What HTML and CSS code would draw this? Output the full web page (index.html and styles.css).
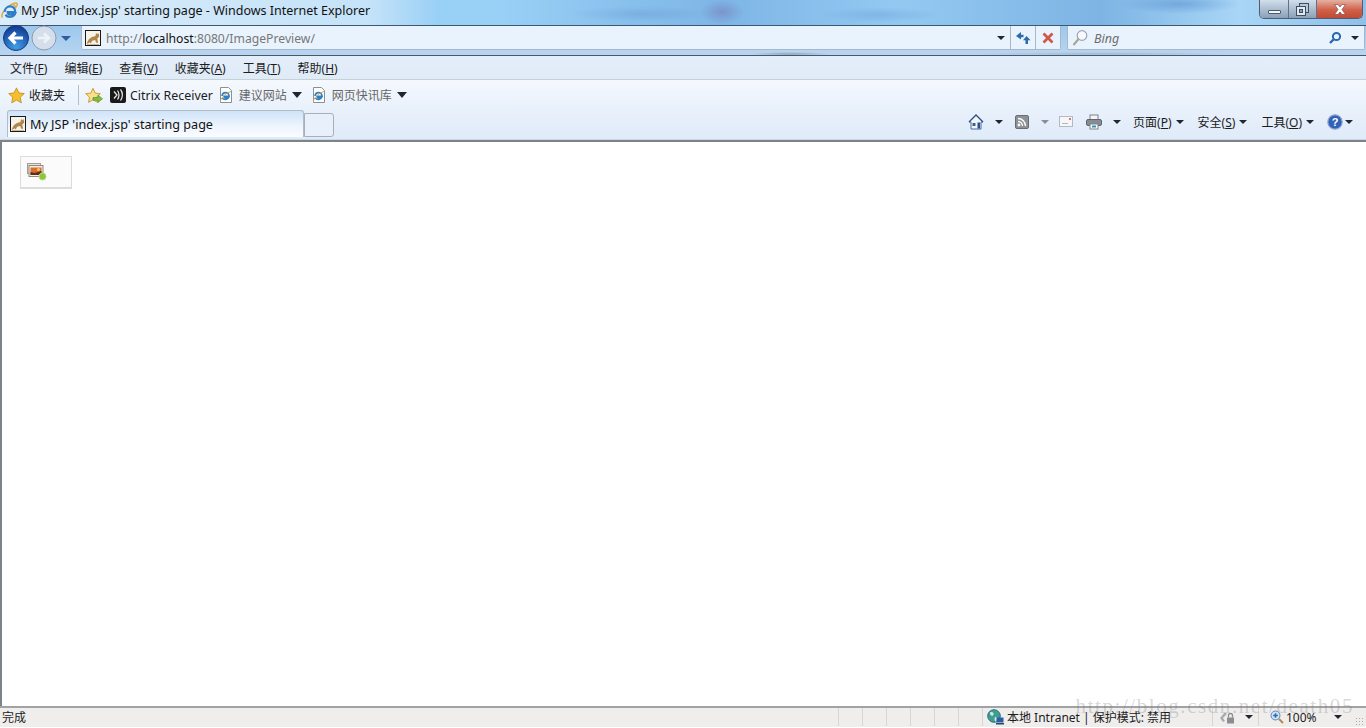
FILE: index.html
```html
<!DOCTYPE html>
<html>
   <head>
      <meta charset="utf-8">
      <title>My JSP 'index.jsp' starting page</title>
      <link rel="stylesheet" href="styles.css">
   </head>
   <body>
      <svg class="defs" width="0" height="0">
         <symbol id="ie" viewBox="0 0 18 18">
            <path d="M1.500 16.500C-.5 14.500 3 8 8 4.500 11.500 2 16 .3 17 1.500c.7 1-.4 3-1.300 4.200-.5-1.300-1.400-2.300-2.500-2.900" fill="none" stroke="#d9a93a" stroke-width="1.500"/>
            <path d="M3.800 10.500C4 7 6.600 4.700 9.700 4.700c3.400 0 5.500 2.600 5.400 6H7.100c.1 2.900 4.300 3.300 5.900 1h2.200c-1.600 4.600-8 5.200-10.500 1.800" fill="none" stroke="#2f7fc8" stroke-width="2.300"/>
         </symbol>
         <symbol id="tomcat" viewBox="0 0 16 16">
            <rect x=".5" y=".5" width="15" height="15" fill="#f6f3ea" stroke="#1a1a1a"/>
            <path d="M1.500 13.500l2.500-4.500 3-2 3.500-1 .5-3 1.300 1.200L13.500 3l.8 3.500-2 2 .7 4.500-2-.5-.8-2.500-3 .8-1.500 2.700-1.200-1.200-1.500 1.200z" fill="#b0864a"/>
            <path d="M2 14.500h12" stroke="#cbb78a"/>
         </symbol>
         <symbol id="favpage" viewBox="0 0 16 16">
            <path d="M2.500 .5h8l3 3v12h-11z" fill="#fff" stroke="#8a8f96"/>
            <path d="M4 9C4.200 6.800 5.800 5.600 7.700 5.600c2.100 0 3.500 1.600 3.400 3.700H5.800c.1 1.800 2.700 2.100 3.700.7h1.400c-1 2.900-5 3.200-6.500 1.100" fill="none" stroke="#2f7fc8" stroke-width="1.600"/>
            <path d="M2.500 14.500C2 12.500 7 6 13 4.500" fill="none" stroke="#d9a93a"/>
         </symbol>
      </svg>

      <div class="titlebar">
         <svg class="ico16" width="17" height="17"><use href="#ie"/></svg>
         <span class="title-text">My JSP 'index.jsp' starting page - Windows Internet Explorer</span>
         <div class="winbtns">
            <div class="winbtn minbtn"><span class="min-glyph"></span></div>
            <div class="winbtn maxbtn">
               <svg width="13" height="13" viewBox="0 0 13 13"><rect x="3.500" y=".5" width="9" height="9" fill="#b8c8d8" stroke="#3f4e60"/><rect x=".5" y="3.500" width="9" height="9" fill="#dfe7ef" stroke="#3f4e60"/><rect x="3.500" y="6.500" width="3" height="3" fill="#8aa0b8" stroke="#3f4e60"/></svg>
            </div>
            <div class="winbtn closebtn">
               <svg width="16" height="11" viewBox="0 0 16 11"><path d="M2.500 .5h3.500L8 3l2-2.500h3.500L10 5.500l3.500 5H10L8 8l-2 2.500H2.500L6 5.500z" fill="#fff" stroke="#6e3a30" stroke-width=".6"/></svg>
            </div>
         </div>
      </div>

      <div class="navbar">
         <div class="navbtns">
            <svg width="56" height="28" viewBox="0 0 56 28">
               <defs>
                  <radialGradient id="backfill" cx=".5" cy=".85" r=".8">
                     <stop offset="0" stop-color="#3f9fe8"/>
                     <stop offset="1" stop-color="#123c94"/>
                  </radialGradient>
               </defs>
               <circle cx="43" cy="14" r="12" fill="#d5dfeb" stroke="#8a9bb0"/>
               <path d="M37 14h10M43 9.500l5 4.500-5 4.500" fill="none" stroke="#eef3f8" stroke-width="2.500"/>
               <circle cx="15" cy="14" r="12.500" fill="url(#backfill)" stroke="#1c3a78"/>
               <path d="M22 14H10M14.500 8.500L9 14l5.500 5.500" fill="none" stroke="#fff" stroke-width="3.200"/>
            </svg>
            <span class="drop drop-blue"></span>
         </div>
         <div class="addrbox">
            <svg class="ico16" width="16" height="16"><use href="#tomcat"/></svg>
            <span class="url"><span class="dim">http://</span>localhost<span class="dim">:8080/ImagePreview/</span></span>
            <span class="drop"></span>
            <div class="addr-btn addr-refresh">
               <svg width="16" height="14" viewBox="0 0 16 14"><path d="M6 1L1 5l5 3.500V6.300h2.500V3.800H6zM11.500 5l4 4.200H13V13h-2.500V9.200H8z" fill="#2d6aa8"/></svg>
            </div>
            <div class="addr-btn addr-stop">
               <svg width="12" height="12" viewBox="0 0 12 12"><path d="M1.500 1.500l9 9M10.500 1.500l-9 9" stroke="#d0584a" stroke-width="2.800"/></svg>
            </div>
         </div>
         <div class="searchbox">
            <svg width="16" height="18" viewBox="0 0 16 18"><circle cx="10" cy="6.500" r="4.800" fill="#f6fafe" stroke="#9aa6b0" stroke-width="1.200"/><path d="M6.500 10L1.500 16" stroke="#a9a48c" stroke-width="2"/></svg>
            <span class="search-text">Bing</span>
            <svg class="search-go" width="14" height="14" viewBox="0 0 14 14"><circle cx="8.500" cy="5.500" r="3.600" fill="none" stroke="#2a68b0" stroke-width="2"/><path d="M5.500 8.500L2 12" stroke="#2a68b0" stroke-width="2.400"/></svg>
            <span class="drop"></span>
         </div>
      </div>

      <div class="menubar">
         <span>文件(<u>F</u>)</span>
         <span>编辑(<u>E</u>)</span>
         <span>查看(<u>V</u>)</span>
         <span>收藏夹(<u>A</u>)</span>
         <span>工具(<u>T</u>)</span>
         <span>帮助(<u>H</u>)</span>
      </div>

      <div class="favbar">
         <div class="fav-item">
            <svg width="17" height="17" viewBox="0 0 16 16"><path d="M8 .8l2.200 4.800 5.100.6-3.800 3.500 1 5.200L8 12.300l-4.500 2.600 1-5.200L.7 6.200l5.100-.6z" fill="#f6c02c" stroke="#c98a1c" stroke-width=".8"/></svg>
            <span>收藏夹</span>
         </div>
         <div class="fav-sep"></div>
         <svg class="fav-add" width="18" height="17" viewBox="0 0 18 16"><path d="M8 .8l2.200 4.800 5.100.6-3.800 3.500 1 5.200L8 12.300l-4.500 2.600 1-5.200L.7 6.200l5.100-.6z" fill="#f8e08a" stroke="#c98a1c" stroke-width=".8"/><path d="M8 10h5V7.500l4.500 3.800L13 15v-2.300H8z" fill="#7cc242" stroke="#4d8a22" stroke-width=".6"/></svg>
         <div class="fav-item citrix">
            <svg width="16" height="16" viewBox="0 0 16 16"><rect width="16" height="16" rx="2" fill="#1a1a1a"/><path d="M4 4.500l3 3.500-3 3.500M7.500 3.500c2 2.500 2 6.500 0 9M10.500 2.500c2.500 3 2.500 8 0 11" fill="none" stroke="#eee" stroke-width="1.200"/></svg>
            <span>Citrix Receiver</span>
         </div>
         <div class="fav-item gray">
            <svg width="16" height="16"><use href="#favpage"/></svg>
            <span>建议网站</span>
            <span class="drop drop-big"></span>
         </div>
         <div class="fav-item gray">
            <svg width="16" height="16"><use href="#favpage"/></svg>
            <span>网页快讯库</span>
            <span class="drop drop-big"></span>
         </div>
      </div>

      <div class="tabbar">
         <div class="tab">
            <svg class="ico16" width="16" height="16"><use href="#tomcat"/></svg>
            <span>My JSP 'index.jsp' starting page</span>
         </div>
         <div class="newtab"></div>
         <div class="cmdbar">
            <div class="cmd cmd-home">
               <svg width="16" height="16" viewBox="0 0 16 16"><path d="M8 1L1 8h2v7h10V8h2z" fill="#f2f4f8" stroke="#4a6a9a"/><path d="M1 8l7-7 7 7" fill="none" stroke="#2d4f86" stroke-width="1.400"/><rect x="4.500" y="9" width="3" height="3" fill="#3a5f98"/><rect x="9.500" y="8.500" width="2.500" height="6" fill="#27508c"/></svg>
               <span class="drop"></span>
            </div>
            <div class="cmd cmd-feed">
               <svg width="14" height="14" viewBox="0 0 14 14"><rect x=".5" y=".5" width="13" height="13" rx="1.500" fill="#8e9296" stroke="#6a6e72"/><circle cx="4" cy="10" r="1.400" fill="#fff"/><path d="M3 6.500c2.500 0 4.500 2 4.500 4.500M3 3.500c4.200 0 7.500 3.300 7.500 7.500" fill="none" stroke="#fff" stroke-width="1.400"/></svg>
               <span class="drop drop-faint"></span>
            </div>
            <div class="cmd cmd-mail">
               <svg width="14" height="11" viewBox="0 0 14 11"><rect x=".5" y=".5" width="13" height="10" fill="#f4f6f8" stroke="#b4bac2"/><path d="M3 7.500h6" stroke="#b4bac2"/><rect x="10" y="2" width="2" height="2" fill="#d8717a"/></svg>
            </div>
            <div class="cmd cmd-print">
               <svg width="16" height="16" viewBox="0 0 16 16"><rect x="4" y="1" width="8" height="5" fill="#f4f4f4" stroke="#7c828a"/><rect x=".5" y="5.500" width="15" height="6" rx="1.500" fill="#868c94" stroke="#60666e"/><rect x="4" y="10" width="8" height="5" fill="#fff" stroke="#7c828a"/><rect x="6" y="11.500" width="4" height="2" fill="#3a8fb0"/></svg>
               <span class="drop"></span>
            </div>
            <div class="cmd cmd-text"><span>页面(<u>P</u>)</span><span class="drop"></span></div>
            <div class="cmd cmd-text"><span>安全(<u>S</u>)</span><span class="drop"></span></div>
            <div class="cmd cmd-text"><span>工具(<u>O</u>)</span><span class="drop"></span></div>
            <div class="cmd cmd-help">
               <svg width="16" height="16" viewBox="0 0 16 16"><circle cx="8" cy="8" r="7.200" fill="#2f62b8" stroke="#8fa6d0" stroke-width="1.200"/><text x="8" y="12" class="help-mark">?</text></svg>
               <span class="drop"></span>
            </div>
         </div>
      </div>

      <div class="content">
         <button class="upload-btn">
            <svg width="20" height="18" viewBox="0 0 20 18">
               <rect x=".5" y=".5" width="13" height="10" fill="#e6e2dc" stroke="#a59c92"/>
               <rect x="2" y="2.500" width="14" height="11" fill="#f2eeea" stroke="#95877c"/>
               <rect x="3.500" y="4.500" width="11" height="7.500" fill="#d9702a"/>
               <path d="M3.500 9l4 1 7-2v4h-11z" fill="#5c2c1c"/>
               <circle cx="11.500" cy="6.500" r="1.500" fill="#f7c86a"/>
               <circle cx="15.500" cy="13.500" r="3.500" fill="#8cc43c" stroke="#b7dd7c"/>
            </svg>
         </button>
      </div>

      <div class="statusbar">
         <span class="status-done">完成</span>
         <div class="status-cell cell-small"></div>
         <div class="status-cell cell-small"></div>
         <div class="status-cell cell-small"></div>
         <div class="status-cell cell-small"></div>
         <div class="status-cell cell-small"></div>
         <div class="status-cell cell-small"></div>
         <div class="status-cell status-zone">
            <svg width="17" height="16" viewBox="0 0 17 16"><circle cx="7" cy="7" r="6.300" fill="#3f9f8a" stroke="#2a6f88"/><path d="M3 3.500c2-1 4 0 3.500 2S3 7.500 3 3.500zM8 8c2 0 3 2 1.500 4S7 10 8 8z" fill="#cfe7ee"/><rect x="9.500" y="8.500" width="7" height="5" fill="#2a5fa8"/><rect x="9" y="14" width="8" height="1.500" fill="#30455f"/></svg>
            <span>本地 Intranet | 保护模式: 禁用</span>
         </div>
         <div class="status-cell status-lock">
            <svg width="17" height="15" viewBox="0 0 17 15"><path d="M1 8l5-6 2 2-4 4 2 3-2 1z" fill="#a6acb0"/><rect x="8" y="7.500" width="7" height="6" fill="#8a8e92"/><path d="M9.500 7.500V5.500a2 2 0 0 1 4 0v2" fill="none" stroke="#8a8e92" stroke-width="1.300"/></svg>
            <span class="drop"></span>
         </div>
         <div class="status-cell status-zoom">
            <svg width="14" height="14" viewBox="0 0 14 14"><circle cx="5.500" cy="5.500" r="4.500" fill="#cfe2f4" stroke="#5a8ab8"/><path d="M3.200 5.500h4.600M5.500 3.200v4.600" stroke="#2a68b0" stroke-width="1.500"/><path d="M9 9l4 4" stroke="#b08a50" stroke-width="2"/></svg>
            <span class="zoom-text">100%</span>
            <span class="drop"></span>
         </div>
         <span class="grip"></span>
         <span class="watermark">http://blog.csdn.net/death05</span>
      </div>
   </body>
</html>
```

FILE: styles.css
```css
html, body {
height: 100%;
}
body {
margin: 0;
height: 728px;
overflow: hidden;
position: relative;
display: flex;
flex-direction: column;
font-family: "Noto Sans", "Noto Sans CJK SC", sans-serif;
font-size: 12px;
color: #1c1c1c;
background: #fff;
}
.defs {
position: absolute;
}
.ico16 {
flex: none;
}
u {
text-underline-offset: 1px;
}

/* small arrows */
.drop {
display: inline-block;
flex: none;
width: 0;
height: 0;
border-left: 4px solid transparent;
border-right: 4px solid transparent;
border-top: 4px solid #1f2630;
}
.drop-blue {
border-top-color: #2d5f98;
border-left-width: 5px;
border-right-width: 5px;
border-top-width: 5px;
}
.drop-big {
border-left-width: 5px;
border-right-width: 5px;
border-top-width: 6px;
}
.drop-faint {
border-top-color: #8a8e92;
}

/* title */
.titlebar {
height: 26px;
flex: none;
display: flex;
align-items: flex-start;
padding: 2px 0 0 1px;
box-sizing: border-box;
background:
radial-gradient(ellipse 22px 12px at 722px 12px, rgba(120,110,170,.45), transparent),
radial-gradient(ellipse 70px 8px at 640px 14px, rgba(90,140,200,.3), transparent),
radial-gradient(ellipse 60px 10px at 1180px 4px, rgba(70,130,200,.45), transparent),
radial-gradient(ellipse 60px 8px at 880px 15px, rgba(80,130,200,.25), transparent),
linear-gradient(90deg, rgba(240,247,253,.75) 0, rgba(225,240,252,.6) 370px, rgba(140,196,240,0) 440px),
linear-gradient(90deg, #9ccbef 0, #98d0f6 500px, #7db5e6 720px, #93c9f1 900px, #7db4e4 1100px, #a9d6f6 1240px, #8fc0ea 1366px);
border-bottom: 1px solid #3f5870;
}
.title-text {
margin-left: 3px;
font-size: 12.5px;
line-height: 17px;
color: #111;
}
.winbtns {
margin-left: auto;
margin-right: 3px;
margin-top: -2px;
display: flex;
height: 18px;
border: 1px solid #4e5d70;
border-top: 0;
border-radius: 0 0 5px 5px;
overflow: hidden;
}
.winbtn {
display: flex;
align-items: center;
justify-content: center;
}
.minbtn {
width: 28px;
background: linear-gradient(#d2deeb, #8aa0b8);
border-right: 1px solid #5e7288;
}
.maxbtn {
width: 27px;
background: linear-gradient(#d2deeb, #8aa0b8);
border-right: 1px solid #5e7288;
}
.closebtn {
width: 45px;
background: linear-gradient(#e6b0a2 0, #d0604a 55%, #c24a34 100%);
}
.min-glyph {
width: 11px;
height: 2px;
margin-top: 5px;
background: #f4f6f8;
border: 1px solid #4a5a6c;
border-radius: 1px;
}

/* back/forward, address, search */
.navbar {
height: 30px;
flex: none;
box-sizing: border-box;
display: flex;
align-items: flex-start;
background:
radial-gradient(ellipse 40px 2px at 790px 28px, rgba(70,80,90,.35), transparent),
radial-gradient(ellipse 130px 2px at 1100px 28px, rgba(70,80,90,.2), transparent),
linear-gradient(#9cc8ee 0, #b8d5f0 100%);
border-bottom: 1px solid #4a5868;
}
.navbtns {
display: flex;
align-items: center;
width: 81px;
flex: none;
height: 24px;
padding-left: 1px;
box-sizing: border-box;
}
.navbtns svg {
flex: none;
}
.navbtns .drop {
margin-left: 4px;
}
.addrbox {
flex: none;
width: 980px;
height: 24px;
box-sizing: border-box;
display: flex;
align-items: center;
padding-left: 3px;
background: #e9f3fe;
border: 1px solid #a8b8c8;
border-top: 0;
border-radius: 0 0 2px 2px;
}
.url {
margin-left: 5px;
padding-top: 2px;
font-size: 12.2px;
color: #111;
}
.dim {
color: #777;
}
.addrbox .drop {
margin-left: auto;
margin-right: 5px;
}
.addr-btn {
width: 25px;
height: 100%;
display: flex;
align-items: center;
justify-content: center;
border-left: 1px solid #a8b8c8;
box-sizing: border-box;
}
.searchbox {
flex: none;
width: 298px;
height: 24px;
margin-left: 6px;
box-sizing: border-box;
display: flex;
align-items: center;
padding: 0 5px 0 4px;
background: #e9f3fe;
border: 1px solid #a8b8c8;
border-top: 0;
border-radius: 0 0 2px 2px;
}
.search-text {
margin-left: 6px;
padding-top: 2px;
font-style: italic;
font-size: 12.5px;
color: #6c6c6c;
}
.search-go {
margin-left: auto;
margin-right: 9px;
}

/* menu */
.menubar {
height: 24px;
flex: none;
box-sizing: border-box;
display: flex;
align-items: center;
gap: 17px;
padding-left: 10px;
background: linear-gradient(#e4eefa 0, #e0ebf8 100%);
border-bottom: 1px solid #c8d0d8;
font-size: 12px;
}

/* favorites */
.favbar {
height: 28px;
flex: none;
box-sizing: border-box;
display: flex;
align-items: center;
padding: 2px 0 0 8px;
background: linear-gradient(#f5f9fe, #e9f1fb);
}
.fav-item {
display: flex;
align-items: center;
gap: 4px;
}
.fav-item.gray {
gap: 5px;
color: #666;
margin-right: 9px;
}
.fav-sep {
width: 1px;
height: 20px;
margin: 0 6px 0 13px;
background: #b4bec8;
}
.citrix {
margin: 0 5px 0 7px;
font-size: 12.4px;
gap: 4px;
}

/* tabs and commands */
.tabbar {
height: 34px;
flex: none;
box-sizing: border-box;
display: flex;
align-items: flex-end;
padding: 0 0 3px 7px;
background: linear-gradient(#e9f1fb, #dfebf9);
border-bottom: 2px solid #7e8388;
box-shadow: inset 0 -1px 0 #cdd7e2;
}
.tab {
width: 297px;
height: 27px;
flex: none;
box-sizing: border-box;
display: flex;
align-items: center;
gap: 4px;
padding-left: 2px;
font-size: 12.6px;
color: #111;
border: 1px solid #b2bcc8;
border-bottom: 0;
border-radius: 3px 3px 0 0;
background: linear-gradient(#cfe3f8, #eef5fd 60%, #fafcff);
}
.newtab {
width: 30px;
height: 24px;
flex: none;
box-sizing: border-box;
border: 1px solid #a4b0bc;
border-radius: 0 3px 3px 0;
background: #e8f1fb;
}
.cmdbar {
margin-left: auto;
display: flex;
align-items: center;
height: 27px;
padding: 0 13px 4px 0;
box-sizing: border-box;
}
.cmd {
display: flex;
align-items: center;
}
.cmd-home {
gap: 11px;
margin-right: 12px;
}
.cmd-feed {
gap: 12px;
margin-right: 10px;
}
.cmd-mail {
margin-right: 13px;
}
.cmd-print {
gap: 11px;
margin-right: 12px;
}
.cmd-text {
gap: 4px;
margin-right: 14px;
font-size: 12px;
}
.cmd-help {
gap: 2px;
margin-left: -1px;
}
.help-mark {
font: bold 11px "Liberation Sans", sans-serif;
fill: #fff;
text-anchor: middle;
}

/* page */
.content {
flex: 1;
min-height: 0;
border-left: 2px solid #7e8388;
padding: 14px 0 0 18px;
background: #fff;
}
.upload-btn {
display: flex;
align-items: center;
width: 52px;
height: 33px;
padding: 0 0 0 6px;
box-sizing: border-box;
border: 1px solid #dcdcdc;
border-bottom-width: 2px;
background: #fbfbfb;
}

/* status */
.statusbar {
height: 22px;
flex: none;
box-sizing: border-box;
position: relative;
display: flex;
align-items: center;
padding-bottom: 1px;
background: #f0eeed;
background-clip: padding-box;
border-top: 2px solid #a0a2a4;
border-bottom: 1px solid #fff;
}
.status-done {
width: 838px;
padding-left: 2px;
box-sizing: border-box;
flex: none;
}
.status-cell {
height: 100%;
box-sizing: border-box;
flex: none;
display: flex;
align-items: center;
border-left: 1px solid #d8d6d4;
}
.cell-small {
width: 24px;
}
.status-zone {
width: 230px;
gap: 3px;
padding-left: 4px;
}
.status-lock {
width: 46px;
gap: 9px;
padding-left: 6px;
}
.status-zoom {
flex: 1;
padding-left: 11px;
gap: 2px;
}
.zoom-text {
width: 46px;
}
.grip {
position: absolute;
right: 2px;
bottom: 2px;
width: 9px;
height: 8px;
background: radial-gradient(circle, #a8a8a8 1px, transparent 1px) 0 0 / 3px 3px;
}
.watermark {
position: absolute;
right: 12px;
top: -14px;
font-family: "Liberation Serif", serif;
font-size: 21px;
letter-spacing: 1.57px;
color: rgba(120, 120, 120, .3);
white-space: nowrap;
}
```
